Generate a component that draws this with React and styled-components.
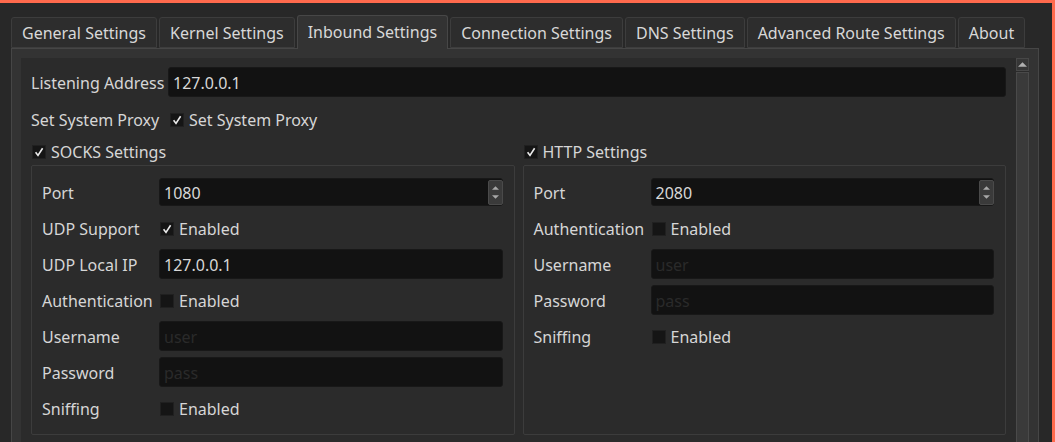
import styled, { createGlobalStyle } from "styled-components";

const GlobalStyle = createGlobalStyle`
  html, body {
    margin: 0;
    padding: 0;
    background: #282828;
  }
  body {
    font-family: "Noto Sans", "DejaVu Sans", sans-serif;
    font-size: 16px;
    color: #d6d6d6;
  }
  * { box-sizing: border-box; }
`;

const Window = styled.div`
  width: 1055px;
  height: 442px;
  overflow: hidden;
  background: #282828;
  border-top: 3px solid #ff6a4d;
  border-right: 3px solid #ff6a4d;
  padding: 12px 13px 0 11px;
  display: flex;
  flex-direction: column;
`;

const TabBar = styled.div`
  display: flex;
  align-items: flex-end;
  gap: 2px;
  height: 33px;
  position: relative;
  z-index: 1;
`;

const Tab = styled.div`
  height: ${({ active }) => (active ? "34px" : "31px")};
  margin-bottom: ${({ active }) => (active ? "-1px" : "0")};
  padding: 0 10px;
  display: flex;
  align-items: center;
  padding-bottom: ${({ active }) => (active ? "2px" : "0")};
  background: ${({ active }) => (active ? "#333333" : "#2d2d2d")};
  border: 1px solid ${({ active }) => (active ? "#474747" : "#3d3d3d")};
  border-bottom: ${({ active }) => (active ? "none" : "1px solid #3d3d3d")};
  border-radius: 3px 3px 0 0;
  color: #d8d8d8;
  white-space: nowrap;
`;

const Pane = styled.div`
  width: 1028px;
  flex: 1;
  border: 1px solid #464646;
  border-bottom: none;
  background: #333333;
  padding: 9px 9px 0 9px;
  display: flex;
`;

const ScrollArea = styled.div`
  flex: 1;
  background: #2b2b2b;
  display: flex;
`;

const Content = styled.div`
  flex: 1;
  padding: 9px 10px 0 10px;
  display: flex;
  flex-direction: column;
`;

const ScrollBar = styled.div`
  width: 13px;
  display: flex;
  flex-direction: column;
  gap: 1px;
`;

const ScrollButton = styled.div`
  height: 13px;
  background: #363636;
  border: 1px solid #474747;
  display: flex;
  align-items: center;
  justify-content: center;
`;

const ScrollHandle = styled.div`
  flex: 1;
  background: #3a3a3a;
  border: 1px solid #4a4a4a;
  border-bottom: none;
`;

const Row = styled.div`
  display: flex;
  align-items: center;
  height: 30px;
  padding-top: 1px;
  margin-top: ${({ gap }) => gap ?? 6}px;
`;

const Label = styled.div`
  width: ${({ w }) => w}px;
  flex-shrink: 0;
  white-space: nowrap;
`;

const LineEdit = styled.div`
  flex: 1;
  height: 30px;
  margin-top: -1px;
  background: #121212;
  border: 1px solid #181818;
  border-radius: 3px;
  padding: 1px 4px 0 4px;
  display: flex;
  align-items: center;
  color: ${({ placeholder }) => (placeholder ? "#2a2a2a" : "#d8d8d8")};
`;

const SpinBox = styled(LineEdit)`
  height: 28px;
  padding-right: 0;
  justify-content: space-between;
`;

const SpinButtons = styled.div`
  width: 15px;
  height: 100%;
  margin-top: -1px;
  background: #3a3a3a;
  border: 1px solid #4a4a4a;
  border-radius: 2px;
  display: flex;
  flex-direction: column;
  align-items: center;
  justify-content: space-evenly;
  margin-right: -1px;
`;

const Check = styled.label`
  display: flex;
  align-items: center;
  gap: 5px;
  margin-left: ${({ offset }) => offset ?? 1}px;
  white-space: nowrap;
`;

const Box = styled.span`
  width: 14px;
  height: 14px;
  background: #151515;
  border: 1px solid #202020;
  display: flex;
  align-items: center;
  justify-content: center;
`;

const Columns = styled.div`
  display: flex;
  gap: 8px;
  margin-top: 7px;
`;

const Group = styled.div`
  flex: 1;
  display: flex;
  flex-direction: column;
`;

const GroupTitle = styled.div`
  height: 20px;
  padding-top: 1px;
  display: flex;
  align-items: center;
`;

const Frame = styled.div`
  margin-top: 4px;
  height: 270px;
  border: 1px solid #3c3c3c;
  border-radius: 2px;
  padding: 5px 11px 0 10px;
`;

const Tri = ({ up, size = 7, color = "#a8a8a8" }) => (
  <svg width={size} height={Math.ceil(size / 2)} viewBox="0 0 8 4">
    <path d={up ? "M0 4 L4 0 L8 4 Z" : "M0 0 L4 4 L8 0 Z"} fill={color} />
  </svg>
);

const CheckBox = ({ checked, children, offset }) => (
  <Check offset={offset}>
    <Box>
      {checked && (
        <svg width="10" height="10" viewBox="0 0 10 10">
          <path d="M1.6 5.2 L4 8.4 L8.6 1.2" stroke="#ececec" strokeWidth="1.6" fill="none" />
        </svg>
      )}
    </Box>
    {children}
  </Check>
);

const tabs = [
  "General Settings",
  "Kernel Settings",
  "Inbound Settings",
  "Connection Settings",
  "DNS Settings",
  "Advanced Route Settings",
  "About",
];

const LW = 117;

function SocksGroup() {
  return (
    <Group>
      <GroupTitle>
        <CheckBox checked offset={1}>SOCKS Settings</CheckBox>
      </GroupTitle>
      <Frame>
        <Row>
          <Label w={LW}>Port</Label>
          <SpinBox>
            1080
            <SpinButtons>
              <Tri up />
              <Tri />
            </SpinButtons>
          </SpinBox>
        </Row>
        <Row>
          <Label w={LW}>UDP Support</Label>
          <CheckBox checked>Enabled</CheckBox>
        </Row>
        <Row>
          <Label w={LW}>UDP Local IP</Label>
          <LineEdit>127.0.0.1</LineEdit>
        </Row>
        <Row>
          <Label w={LW}>Authentication</Label>
          <CheckBox>Enabled</CheckBox>
        </Row>
        <Row>
          <Label w={LW}>Username</Label>
          <LineEdit placeholder>user</LineEdit>
        </Row>
        <Row>
          <Label w={LW}>Password</Label>
          <LineEdit placeholder>pass</LineEdit>
        </Row>
        <Row>
          <Label w={LW}>Sniffing</Label>
          <CheckBox>Enabled</CheckBox>
        </Row>
      </Frame>
    </Group>
  );
}

function HttpGroup() {
  return (
    <Group>
      <GroupTitle>
        <CheckBox checked offset={1}>HTTP Settings</CheckBox>
      </GroupTitle>
      <Frame>
        <Row>
          <Label w={LW}>Port</Label>
          <SpinBox>
            2080
            <SpinButtons>
              <Tri up />
              <Tri />
            </SpinButtons>
          </SpinBox>
        </Row>
        <Row>
          <Label w={LW}>Authentication</Label>
          <CheckBox>Enabled</CheckBox>
        </Row>
        <Row>
          <Label w={LW}>Username</Label>
          <LineEdit placeholder>user</LineEdit>
        </Row>
        <Row>
          <Label w={LW}>Password</Label>
          <LineEdit placeholder>pass</LineEdit>
        </Row>
        <Row>
          <Label w={LW}>Sniffing</Label>
          <CheckBox>Enabled</CheckBox>
        </Row>
      </Frame>
    </Group>
  );
}

export default function App() {
  return (
    <>
      <GlobalStyle />
      <Window>
        <TabBar>
          {tabs.map((t) => (
            <Tab key={t} active={t === "Inbound Settings"}>
              {t}
            </Tab>
          ))}
        </TabBar>
        <Pane>
          <ScrollArea>
            <Content>
              <Row gap={0}>
                <Label w={137}>Listening Address</Label>
                <LineEdit>127.0.0.1</LineEdit>
              </Row>
              <Row gap={7}>
                <Label w={137}>Set System Proxy</Label>
                <CheckBox checked offset={2}>Set System Proxy</CheckBox>
              </Row>
              <Columns>
                <SocksGroup />
                <HttpGroup />
              </Columns>
            </Content>
            <ScrollBar>
              <ScrollButton>
                <Tri up size={9} color="#b0b0b0" />
              </ScrollButton>
              <ScrollHandle />
            </ScrollBar>
          </ScrollArea>
        </Pane>
      </Window>
    </>
  );
}
